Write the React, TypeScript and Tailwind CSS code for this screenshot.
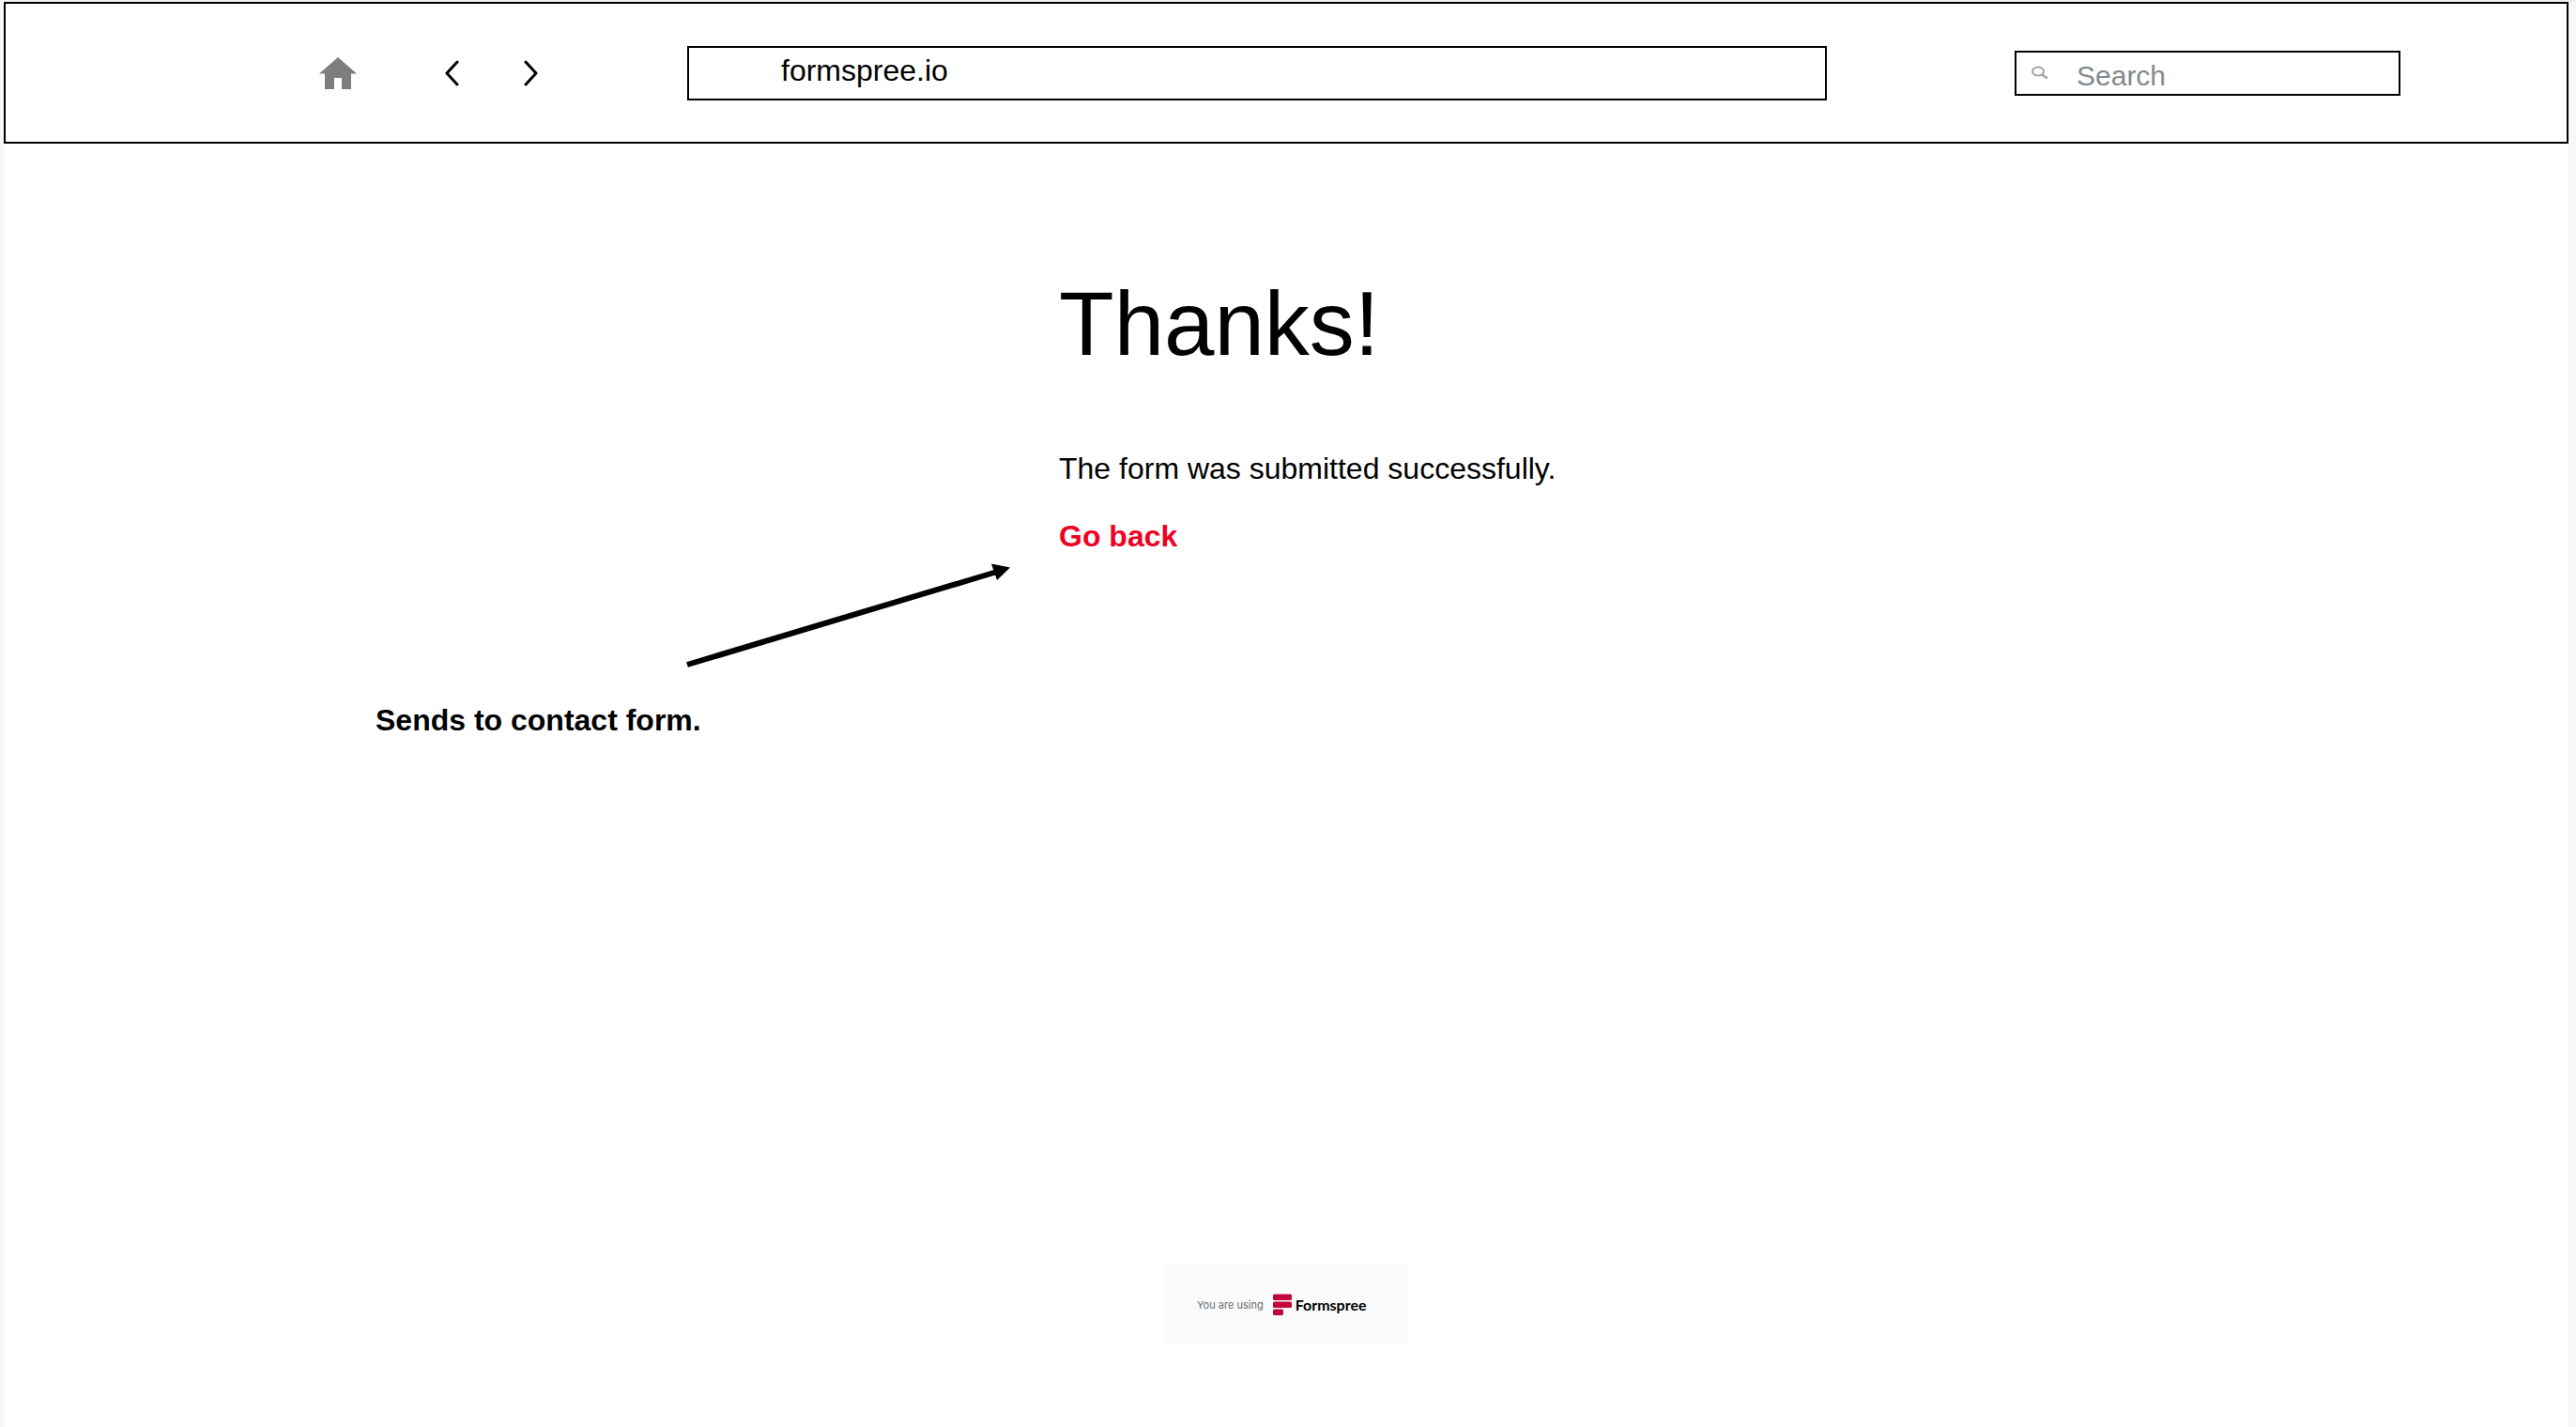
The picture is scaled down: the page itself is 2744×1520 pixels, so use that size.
function HomeIcon() {
  return (
    <svg viewBox="0 0 40 36" className="h-9 w-10" fill="#7d7d7d" aria-hidden="true">
      <path d="M20 1L40 18.5H34V35H24V23H16V35H6V18.5H0Z" />
    </svg>
  );
}

function Chevron({ d }: { d: string }) {
  return (
    <svg
      viewBox="0 0 18 28"
      className="h-7 w-[18px]"
      fill="none"
      stroke="#000"
      strokeWidth="3"
      strokeLinecap="round"
      strokeLinejoin="round"
      aria-hidden="true"
    >
      <path d={d} />
    </svg>
  );
}

function BrowserBar() {
  return (
    <header className="flex h-[151px] items-center border-2 border-black bg-white pr-[177px] pl-[334px]">
      <nav className="flex items-center" aria-label="Browser">
        <button type="button" aria-label="Home">
          <HomeIcon />
        </button>
        <button type="button" aria-label="Back" className="ml-[92px]">
          <Chevron d="M15 2L4 14L15 26" />
        </button>
        <button type="button" aria-label="Forward" className="ml-[67px]">
          <Chevron d="M3 2L14 14L3 26" />
        </button>
      </nav>
      <input
        type="text"
        aria-label="Address"
        defaultValue="formspree.io"
        className="ml-[157px] h-[58px] min-w-0 flex-1 border-2 border-black bg-white pb-1 pl-[98px] text-[32px] text-black outline-none"
      />
      <label className="ml-[200px] flex h-12 w-[411px] items-center border-2 border-black bg-white pl-4">
        <svg viewBox="0 0 20 16" className="h-4 w-5 shrink-0" fill="none" stroke="#a3a3a3" strokeWidth="2" aria-hidden="true">
          <ellipse cx="7" cy="6" rx="6" ry="4.6" />
          <path d="M11 9.5L17 13.5" strokeWidth="2.4" />
        </svg>
        <input
          type="search"
          aria-label="Search"
          placeholder="Search"
          className="ml-7 h-full min-w-0 flex-1 bg-transparent pt-1.5 text-[30px] outline-none placeholder:text-[#83898d] placeholder:opacity-100"
        />
      </label>
    </header>
  );
}

function Annotation() {
  return (
    <figure className="flex w-[680px] flex-col">
      <svg viewBox="0 0 352 112" className="h-28 w-[352px] self-end" aria-hidden="true">
        <path d="M4 108L334 9" stroke="#000" strokeWidth="6" />
        <path d="M328 0.5L348 4.5L334 18Z" fill="#000" />
      </svg>
      <figcaption className="mt-[35px] text-[32px] leading-10 font-bold">Sends to contact form.</figcaption>
    </figure>
  );
}

function FormspreeBadge() {
  return (
    <footer className="mx-auto mt-auto mb-[88px] flex h-[86px] w-[260px] items-center bg-[#f8fafc] pt-0.5 pl-[35px]">
      <span className="font-['Inter',sans-serif] text-[11px] leading-4 text-[#6b6b6b]">You are using</span>
      <svg viewBox="0 0 20 24" className="ml-2.5 h-6 w-5" fill="#c0063a" aria-hidden="true">
        <rect y="0.5" width="20" height="6.5" rx="1.5" />
        <rect y="8.5" width="20" height="6.5" rx="1.5" />
        <rect y="16.5" width="11" height="6.5" rx="1.5" />
      </svg>
      <span className="ml-1 font-['Lato',sans-serif] text-[16px] leading-4 font-bold text-black">Formspree</span>
    </footer>
  );
}

export default function App() {
  return (
    <div className="flex min-h-screen flex-col border-t-2 border-[#eeeff0] bg-[#f5f7fa] pr-2 pl-1 font-['Liberation_Sans',Arial,sans-serif] text-black">
      <BrowserBar />
      <div className="flex flex-1 flex-col bg-white">
        <main className="grid grid-cols-[1124fr_1608fr]">
          <div className="flex justify-end pt-[447px] pr-12">
            <Annotation />
          </div>
          <section className="pt-36">
            <h1 className="text-[96px] leading-24">Thanks!</h1>
            <p className="mt-[86px] text-[32px] leading-10">The form was submitted successfully.</p>
            <a href="#contact" className="mt-8 inline-block text-[32px] leading-10 font-bold text-[#f00023]">
              Go back
            </a>
          </section>
        </main>
        <FormspreeBadge />
      </div>
    </div>
  );
}
